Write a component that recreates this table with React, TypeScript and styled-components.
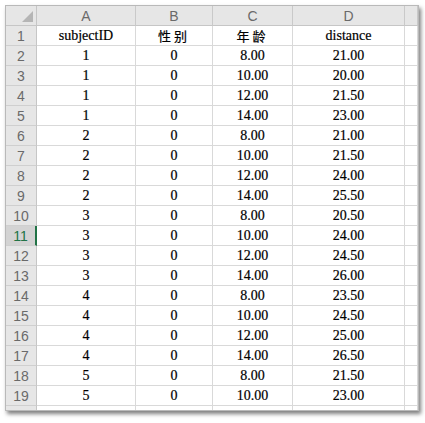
import React from "react";
import styled, { createGlobalStyle } from "styled-components";

const Global = createGlobalStyle`
  html, body { margin: 0; padding: 0; background: #ffffff; }
  body { font-family: "Liberation Serif", serif; }
`;

const Page = styled.div`
  padding: 5px 0 0 5px;
  width: 425px;
  height: 423px;
  box-sizing: border-box;
`;

const Sheet = styled.div`
  width: 414px;
  height: 406px;
  box-sizing: border-box;
  border: 1px solid #b9b9b9;
  box-shadow: 2px 3px 4px rgba(0, 0, 0, 0.5);
  overflow: hidden;
  background: #ffffff;
`;

const Grid = styled.div`
  display: grid;
  grid-template-columns: 31px 99px 77px 80px 112px 13px;
  grid-auto-rows: 20px;
`;

const Corner = styled.div`
  background: #e6e6e6;
  border-right: 1px solid #c6c6c6;
  border-bottom: 1px solid #c6c6c6;
  display: flex;
  align-items: flex-end;
  justify-content: flex-end;
  padding: 0 3px 3px 0;
  box-sizing: border-box;
`;

const ColHead = styled.div`
  background: #e6e6e6;
  border-right: 1px solid #c9c9c9;
  border-bottom: 1px solid #c6c6c6;
  box-sizing: border-box;
  display: flex;
  align-items: center;
  justify-content: center;
  font-family: "Liberation Sans", Arial, sans-serif;
  font-size: 14px;
  color: #6a6a6a;
`;

const RowHead = styled.div<{ $selected?: boolean }>`
  background: ${(p) => (p.$selected ? "#d3d3d3" : "#e6e6e6")};
  border-right: ${(p) => (p.$selected ? "2px solid #217346" : "1px solid #c6c6c6")};
  border-bottom: 1px solid #cfcfcf;
  box-sizing: border-box;
  display: flex;
  align-items: center;
  justify-content: center;
  font-family: "Liberation Sans", Arial, sans-serif;
  font-size: 14px;
  color: ${(p) => (p.$selected ? "#217346" : "#6a6a6a")};
  overflow: hidden;
`;

const Cell = styled.div<{ $cjk?: boolean }>`
  border-right: 1px solid #d9d9d9;
  border-bottom: 1px solid #d9d9d9;
  box-sizing: border-box;
  display: flex;
  align-items: center;
  justify-content: center;
  font-family: ${(p) =>
    p.$cjk
      ? '"Noto Sans CJK SC", "Liberation Serif", serif'
      : '"Liberation Serif", "Times New Roman", serif'};
  font-size: ${(p) => (p.$cjk ? "13px" : "14px")};
  letter-spacing: ${(p) => (p.$cjk ? "3px" : "0")};
  color: #000000;
  -webkit-text-stroke: 0.2px #000000;
  white-space: nowrap;
`;

const rows: string[][] = [
  ["subjectID", "性别", "年龄", "distance"],
  ["1", "0", "8.00", "21.00"],
  ["1", "0", "10.00", "20.00"],
  ["1", "0", "12.00", "21.50"],
  ["1", "0", "14.00", "23.00"],
  ["2", "0", "8.00", "21.00"],
  ["2", "0", "10.00", "21.50"],
  ["2", "0", "12.00", "24.00"],
  ["2", "0", "14.00", "25.50"],
  ["3", "0", "8.00", "20.50"],
  ["3", "0", "10.00", "24.00"],
  ["3", "0", "12.00", "24.50"],
  ["3", "0", "14.00", "26.00"],
  ["4", "0", "8.00", "23.50"],
  ["4", "0", "10.00", "24.50"],
  ["4", "0", "12.00", "25.00"],
  ["4", "0", "14.00", "26.50"],
  ["5", "0", "8.00", "21.50"],
  ["5", "0", "10.00", "23.00"],
  ["", "", "", ""],
];

export default function App() {
  return (
    <>
      <Global />
      <Page>
        <Sheet>
          <Grid>
            <Corner>
              <svg width="11" height="11" viewBox="0 0 11 11">
                <polygon points="11,0 11,11 0,11" fill="#b5b5b5" />
              </svg>
            </Corner>
            {["A", "B", "C", "D", ""].map((c, i) => (
              <ColHead key={i}>{c}</ColHead>
            ))}
            {rows.map((r, ri) => (
              <React.Fragment key={ri}>
                <RowHead $selected={ri + 1 === 11}>{ri + 1}</RowHead>
                {r.map((v, ci) => (
                  <Cell key={ci} $cjk={ri === 0 && (ci === 1 || ci === 2)}>
                    {v}
                  </Cell>
                ))}
                <Cell />
              </React.Fragment>
            ))}
          </Grid>
        </Sheet>
      </Page>
    </>
  );
}
